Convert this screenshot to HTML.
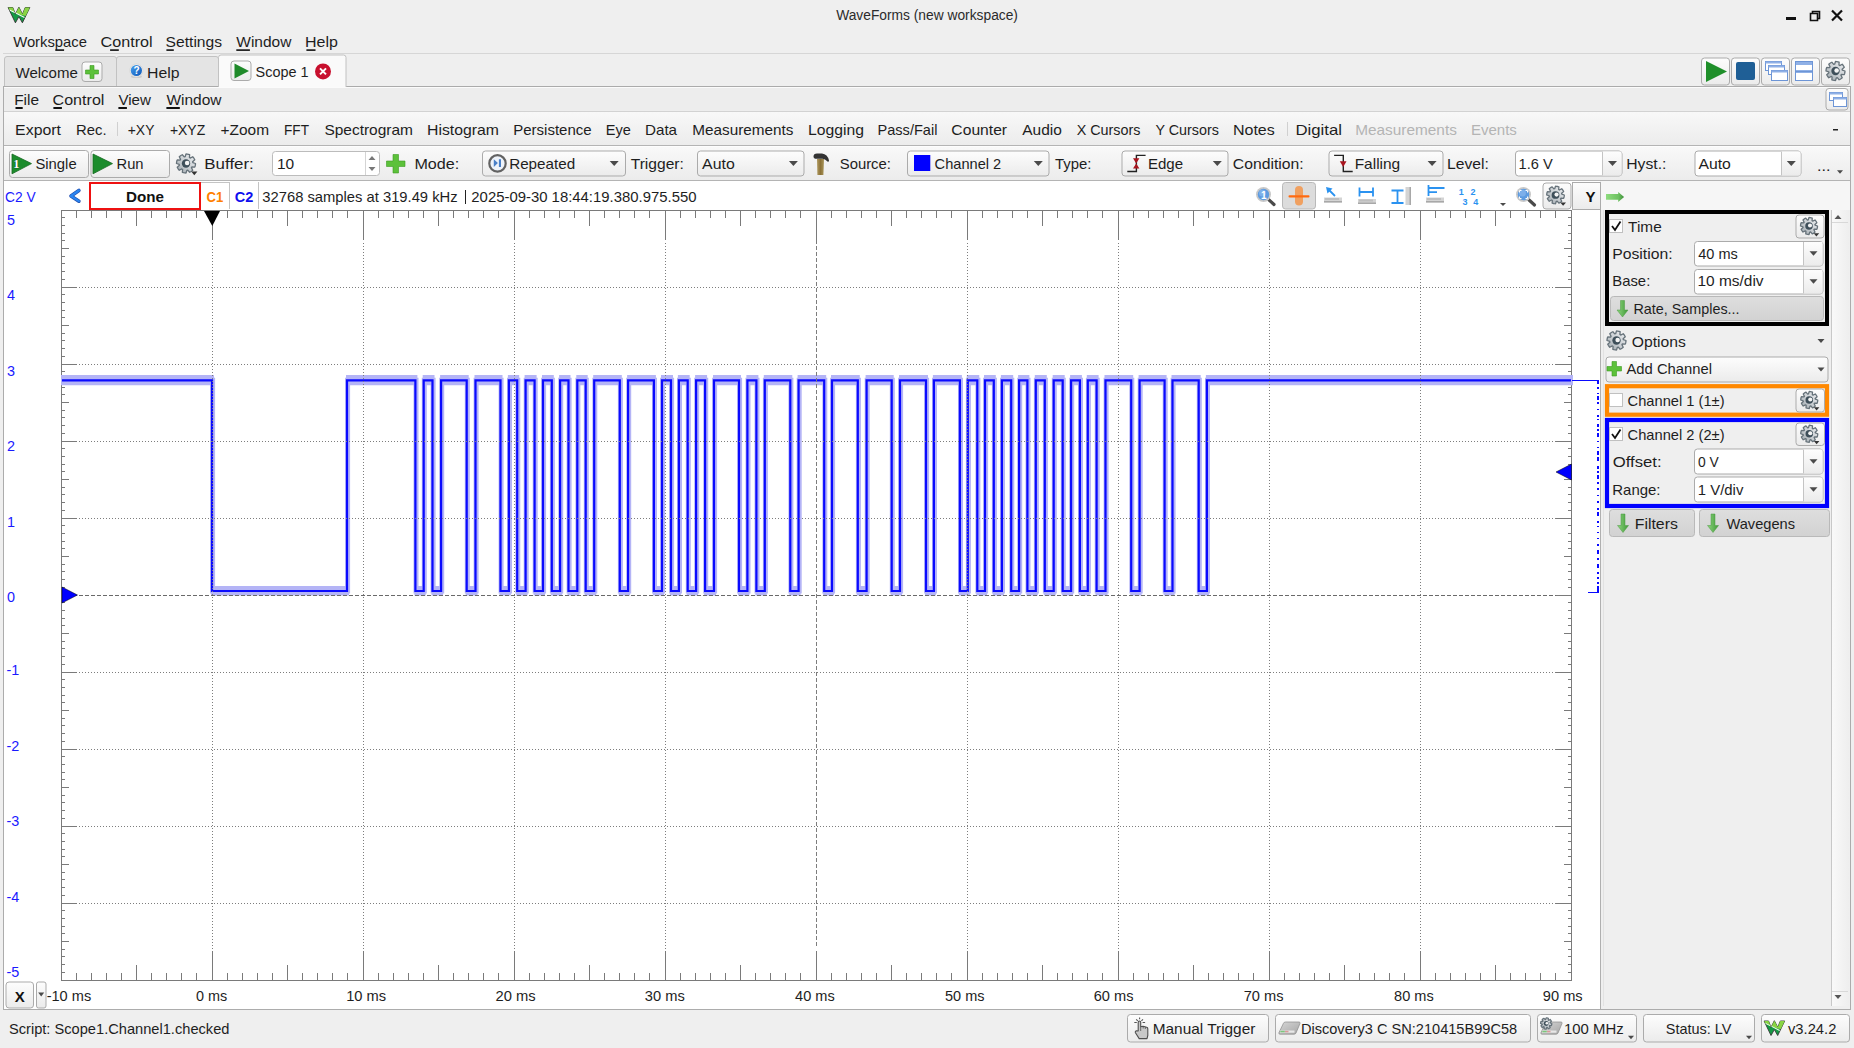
<!DOCTYPE html>
<html><head><meta charset="utf-8"><title>WaveForms</title>
<style>html,body{margin:0;padding:0;background:#efefef;overflow:hidden;width:1854px;height:1048px}</style>
</head><body>
<svg width="1854" height="1048" viewBox="0 0 1854 1048" font-family="Liberation Sans, sans-serif" style="display:block">
<defs>
<linearGradient id="btn" x1="0" y1="0" x2="0" y2="1"><stop offset="0" stop-color="#fdfdfd"/><stop offset="1" stop-color="#ebebeb"/></linearGradient>
<linearGradient id="tb1" x1="0" y1="0" x2="0" y2="1"><stop offset="0" stop-color="#f8f8f8"/><stop offset="1" stop-color="#ececec"/></linearGradient>
<linearGradient id="tb2" x1="0" y1="0" x2="0" y2="1"><stop offset="0" stop-color="#f9f9f9"/><stop offset="1" stop-color="#ececec"/></linearGradient>
<linearGradient id="gbtn" x1="0" y1="0" x2="0" y2="1"><stop offset="0" stop-color="#dedede"/><stop offset="1" stop-color="#d2d2d2"/></linearGradient>
<linearGradient id="garr" x1="0" y1="0" x2="1" y2="0"><stop offset="0" stop-color="#8fd47e"/><stop offset="1" stop-color="#3f9a38"/></linearGradient>
<linearGradient id="sbtrack" x1="0" y1="0" x2="1" y2="0"><stop offset="0" stop-color="#f9f9f9"/><stop offset="1" stop-color="#eeeeee"/></linearGradient>
<linearGradient id="devg" x1="0" y1="0" x2="1" y2="1"><stop offset="0" stop-color="#d6d6d6"/><stop offset="1" stop-color="#a6a6a6"/></linearGradient>
<linearGradient id="helpg" x1="0" y1="0" x2="1" y2="1"><stop offset="0" stop-color="#4aa0ee"/><stop offset="1" stop-color="#0a56b8"/></linearGradient>
<linearGradient id="hamg" x1="0" y1="0" x2="1" y2="0"><stop offset="0" stop-color="#b09a60"/><stop offset="0.5" stop-color="#8c7238"/><stop offset="1" stop-color="#a89458"/></linearGradient>
<linearGradient id="garr2" x1="0" y1="0" x2="1" y2="0"><stop offset="0" stop-color="#8edc7e"/><stop offset="0.7" stop-color="#6cc060"/><stop offset="1" stop-color="#3e8e3a"/></linearGradient>
<linearGradient id="gearg" x1="1" y1="0" x2="0" y2="1"><stop offset="0" stop-color="#eef0f2"/><stop offset="0.55" stop-color="#c8cdd1"/><stop offset="1" stop-color="#9aa4aa"/></linearGradient>
</defs>
<rect x="0" y="0" width="1854" height="1048" fill="#efefef"/>
<g transform="translate(8,7) scale(1.0)"><clipPath id="wclip8"><path d="M0.1,0.5 L4.8,0.5 L7.4,7.2 L10.9,0.2 L14.5,7.2 L17.2,0.5 L21.8,0.5 L14.4,15.8 L10.9,9.6 L7.4,15.8 Z"/></clipPath><path d="M0.1,0.5 L4.8,0.5 L7.4,7.2 L10.9,0.2 L14.5,7.2 L17.2,0.5 L21.8,0.5 L14.4,15.8 L10.9,9.6 L7.4,15.8 Z" fill="#159a44" stroke="#333" stroke-width="0.9" stroke-linejoin="round"/><g clip-path="url(#wclip8)"><path d="M-1,-1 H23 V9 Q16,10.5 1.5,2.8 Z" fill="#8ad444"/><path d="M1.5,3 Q9,6.5 16.5,10.5" stroke="#f4fff0" stroke-width="1.1" fill="none"/></g></g>
<text x="836.20" y="19.6" font-size="14" fill="#2b2b2b" textLength="181.78" lengthAdjust="spacingAndGlyphs">WaveForms (new workspace)</text>
<rect x="1786" y="17" width="10" height="3" fill="#111"/>
<path d="M1810.5,13.5 h7 v7 h-7 z M1812.5,13.5 v-2 h7 v7 h-2" fill="none" stroke="#111" stroke-width="1.6"/>
<path d="M1832,10.5 L1842,20.5 M1842,10.5 L1832,20.5" stroke="#111" stroke-width="2.2"/>
<text x="13.20" y="47.2" font-size="14.5" fill="#1e1e1e" textLength="73.73" lengthAdjust="spacingAndGlyphs">Workspace</text>
<rect x="55.3" y="49.3" width="8.799999999999997" height="1.6" fill="#111"/>
<text x="100.57" y="47.2" font-size="14.5" fill="#1e1e1e" textLength="52.05" lengthAdjust="spacingAndGlyphs">Control</text>
<rect x="110.1" y="49.3" width="8.700000000000003" height="1.6" fill="#111"/>
<text x="165.59" y="47.2" font-size="14.5" fill="#1e1e1e" textLength="56.52" lengthAdjust="spacingAndGlyphs">Settings</text>
<rect x="166.4" y="49.3" width="7.400000000000006" height="1.6" fill="#111"/>
<text x="236.30" y="47.2" font-size="14.5" fill="#1e1e1e" textLength="55.08" lengthAdjust="spacingAndGlyphs">Window</text>
<rect x="236.3" y="49.3" width="13.599999999999994" height="1.6" fill="#111"/>
<text x="305.02" y="47.2" font-size="14.5" fill="#1e1e1e" textLength="32.92" lengthAdjust="spacingAndGlyphs">Help</text>
<rect x="306.4" y="49.3" width="9.100000000000023" height="1.6" fill="#111"/>
<rect x="3" y="53" width="1848" height="1" fill="#d6d6d6"/>
<path d="M4.5,86 V59 Q4.5,56.5 7,56.5 H114 Q116.5,56.5 116.5,59 V86" fill="#e4e4e4" stroke="#c2c2c2"/>
<path d="M116.5,86 V59 Q116.5,56.5 119,56.5 H216 Q218.5,56.5 218.5,59 V86" fill="#e4e4e4" stroke="#c2c2c2"/>
<rect x="3" y="86" width="1848" height="1" fill="#ababab"/>
<rect x="4" y="87" width="1846" height="1" fill="#fbfbfb"/>
<rect x="4" y="88" width="1846" height="23" fill="#ededed"/>
<path d="M218.5,87 V57.5 Q218.5,55 221,55 H343.5 Q346,55 346,57.5 V87" fill="#fafafa" stroke="#c2c2c2"/>
<text x="15.50" y="78.2" font-size="14.5" fill="#1e1e1e" textLength="62.30" lengthAdjust="spacingAndGlyphs">Welcome</text>
<rect x="82.0" y="62.0" width="20.0" height="19.5" rx="3" fill="url(#btn)" stroke="#ababab"/>
<path d="M90,65.5 h4 v4.5 h4.5 v4 h-4.5 v4.5 h-4 v-4.5 h-4.5 v-4 h4.5 z" fill="#5cc13a" stroke="#3d9a24" stroke-width="0.6"/>
<ellipse cx="136.4" cy="76.5" rx="5.5" ry="1.5" fill="#bbb" opacity="0.6"/>
<circle cx="136.4" cy="70.5" r="6.6" fill="#f2eeea" stroke="#d4d4d4" stroke-width="0.8"/>
<circle cx="136.4" cy="70.5" r="5.6" fill="url(#helpg)"/>
<text x="133.60" y="74.2" font-size="10" fill="#fff" font-weight="bold">?</text>
<text x="147.14" y="78.2" font-size="14.5" fill="#1e1e1e" textLength="32.49" lengthAdjust="spacingAndGlyphs">Help</text>
<rect x="231.0" y="61.0" width="20.0" height="19.5" rx="3" fill="url(#btn)" stroke="#ababab"/>
<path d="M234.5,63.5 L249,71 L234.5,78.5 Z" fill="#1f8a2a"/>
<text x="255.55" y="77.2" font-size="14.5" fill="#1e1e1e" textLength="52.96" lengthAdjust="spacingAndGlyphs">Scope 1</text>
<circle cx="323" cy="71.4" r="8" fill="#c8102e"/>
<path d="M320,68.4 L326,74.4 M326,68.4 L320,74.4" stroke="#fff" stroke-width="2"/>
<rect x="1701.5" y="58.0" width="28" height="27.0" rx="3" fill="url(#btn)" stroke="#ababab"/>
<rect x="1731.5" y="58.0" width="28" height="27.0" rx="3" fill="url(#btn)" stroke="#ababab"/>
<rect x="1761.5" y="58.0" width="28" height="27.0" rx="3" fill="url(#btn)" stroke="#ababab"/>
<rect x="1791.5" y="58.0" width="28" height="27.0" rx="3" fill="url(#btn)" stroke="#ababab"/>
<rect x="1821.5" y="58.0" width="28" height="27.0" rx="3" fill="url(#btn)" stroke="#ababab"/>
<path d="M1706,61 L1727,71.5 L1706,82 Z" fill="#1f8f2a"/>
<rect x="1736" y="62" width="19" height="18" fill="#1f5f96" rx="2"/>
<rect x="1765.5" y="61.5" width="16" height="9" fill="#fff" stroke="#6d95d6"/>
<rect x="1765.5" y="61.5" width="16" height="2" fill="#8fb0e6"/>
<rect x="1768.5" y="65.5" width="16" height="9" fill="#fff" stroke="#6d95d6"/>
<rect x="1768.5" y="65.5" width="16" height="2" fill="#8fb0e6"/>
<rect x="1771.5" y="70.5" width="16" height="10" fill="#fff" stroke="#6d95d6"/>
<rect x="1771.5" y="70.5" width="16" height="2" fill="#8fb0e6"/>
<rect x="1795.5" y="61.5" width="17" height="19" fill="#fff" stroke="#6d95d6"/>
<rect x="1796" y="62" width="16" height="3" fill="#8fb0e6"/>
<rect x="1796" y="70" width="16" height="3" fill="#8fb0e6"/>
<rect x="1796" y="71" width="17" height="1" fill="#6d95d6"/>
<rect x="3" y="86" width="1" height="924" fill="#acacac"/>
<rect x="1850" y="86" width="1" height="924" fill="#acacac"/>
<text x="14.17" y="105.0" font-size="14.5" fill="#1e1e1e" textLength="24.79" lengthAdjust="spacingAndGlyphs">File</text>
<rect x="15.5" y="107" width="7.199999999999999" height="2" fill="#111"/>
<text x="52.57" y="105.0" font-size="14.5" fill="#1e1e1e" textLength="51.84" lengthAdjust="spacingAndGlyphs">Control</text>
<rect x="53.4" y="107" width="8.5" height="2" fill="#111"/>
<text x="118.40" y="105.0" font-size="14.5" fill="#1e1e1e" textLength="32.52" lengthAdjust="spacingAndGlyphs">View</text>
<rect x="118.4" y="107" width="8.5" height="2" fill="#111"/>
<text x="166.40" y="105.0" font-size="14.5" fill="#1e1e1e" textLength="55.08" lengthAdjust="spacingAndGlyphs">Window</text>
<rect x="166.4" y="107" width="13.400000000000006" height="2" fill="#111"/>
<rect x="4" y="111" width="1846" height="1" fill="#d2d2d2"/>
<rect x="1826.0" y="88.5" width="22.0" height="21.5" rx="3" fill="url(#btn)" stroke="#ababab"/>
<rect x="1829.5" y="92.5" width="13" height="8" fill="#fff" stroke="#6d95d6"/>
<rect x="1829.5" y="92.5" width="13" height="2" fill="#8fb0e6"/>
<rect x="1833.5" y="97.5" width="13" height="9" fill="#fff" stroke="#6d95d6"/>
<rect x="1833.5" y="97.5" width="13" height="2" fill="#8fb0e6"/>
<rect x="4" y="112" width="1846" height="33" fill="url(#tb1)"/>
<rect x="4" y="145" width="1846" height="1" fill="#b4b4b4"/>
<rect x="4" y="146" width="1846" height="34" fill="url(#tb2)"/>
<rect x="4" y="146" width="1846" height="1" fill="#fdfdfd"/>
<text x="15.13" y="134.8" font-size="14.5" fill="#1e1e1e" textLength="45.86" lengthAdjust="spacingAndGlyphs">Export</text>
<text x="76.02" y="134.8" font-size="14.5" fill="#1e1e1e" textLength="30.54" lengthAdjust="spacingAndGlyphs">Rec.</text>
<text x="127.78" y="134.8" font-size="14.5" fill="#1e1e1e" textLength="26.62" lengthAdjust="spacingAndGlyphs">+XY</text>
<text x="169.88" y="134.8" font-size="14.5" fill="#1e1e1e" textLength="35.33" lengthAdjust="spacingAndGlyphs">+XYZ</text>
<text x="220.50" y="134.8" font-size="14.5" fill="#1e1e1e" textLength="48.51" lengthAdjust="spacingAndGlyphs">+Zoom</text>
<text x="284.02" y="134.8" font-size="14.5" fill="#1e1e1e" textLength="24.98" lengthAdjust="spacingAndGlyphs">FFT</text>
<text x="324.40" y="134.8" font-size="14.5" fill="#1e1e1e" textLength="88.58" lengthAdjust="spacingAndGlyphs">Spectrogram</text>
<text x="427.04" y="134.8" font-size="14.5" fill="#1e1e1e" textLength="71.86" lengthAdjust="spacingAndGlyphs">Histogram</text>
<text x="513.21" y="134.8" font-size="14.5" fill="#1e1e1e" textLength="78.43" lengthAdjust="spacingAndGlyphs">Persistence</text>
<text x="605.75" y="134.8" font-size="14.5" fill="#1e1e1e" textLength="25.05" lengthAdjust="spacingAndGlyphs">Eye</text>
<text x="644.99" y="134.8" font-size="14.5" fill="#1e1e1e" textLength="32.09" lengthAdjust="spacingAndGlyphs">Data</text>
<text x="692.38" y="134.8" font-size="14.5" fill="#1e1e1e" textLength="101.11" lengthAdjust="spacingAndGlyphs">Measurements</text>
<text x="807.94" y="134.8" font-size="14.5" fill="#1e1e1e" textLength="55.99" lengthAdjust="spacingAndGlyphs">Logging</text>
<text x="877.55" y="134.8" font-size="14.5" fill="#1e1e1e" textLength="59.85" lengthAdjust="spacingAndGlyphs">Pass/Fail</text>
<text x="951.39" y="134.8" font-size="14.5" fill="#1e1e1e" textLength="55.68" lengthAdjust="spacingAndGlyphs">Counter</text>
<text x="1022.20" y="134.8" font-size="14.5" fill="#1e1e1e" textLength="39.63" lengthAdjust="spacingAndGlyphs">Audio</text>
<text x="1076.71" y="134.8" font-size="14.5" fill="#1e1e1e" textLength="63.76" lengthAdjust="spacingAndGlyphs">X Cursors</text>
<text x="1155.45" y="134.8" font-size="14.5" fill="#1e1e1e" textLength="63.39" lengthAdjust="spacingAndGlyphs">Y Cursors</text>
<text x="1232.92" y="134.8" font-size="14.5" fill="#1e1e1e" textLength="41.89" lengthAdjust="spacingAndGlyphs">Notes</text>
<text x="1295.46" y="134.8" font-size="14.5" fill="#1e1e1e" textLength="46.55" lengthAdjust="spacingAndGlyphs">Digital</text>
<text x="1355.17" y="134.8" font-size="14.5" fill="#b4b4b4" textLength="101.72" lengthAdjust="spacingAndGlyphs">Measurements</text>
<text x="1470.90" y="134.8" font-size="14.5" fill="#b4b4b4" textLength="46.01" lengthAdjust="spacingAndGlyphs">Events</text>
<rect x="1833" y="129" width="5" height="1.5" fill="#222"/>
<rect x="117" y="122" width="1" height="14" fill="#d0d0d0"/>
<rect x="1287" y="122" width="1" height="14" fill="#d0d0d0"/>
<rect x="4" y="180" width="1846" height="1" fill="#b4b4b4"/>
<rect x="9.5" y="150.5" width="79" height="27" rx="3" fill="url(#btn)" stroke="#ababab"/>
<path d="M12,154 L31.5,163.6 L12,173.8 Z" fill="#1b8c2c" stroke="#166a22" stroke-width="0.8" stroke-linejoin="round"/>
<text x="13.2" y="168" font-family="Liberation Serif, serif" font-weight="bold" font-size="12.5" fill="#fff" stroke="#0d4a14" stroke-width="0.6" paint-order="stroke">1</text>
<text x="35.43" y="168.8" font-size="14.5" fill="#1e1e1e" textLength="41.24" lengthAdjust="spacingAndGlyphs">Single</text>
<rect x="91.0" y="150.5" width="78.5" height="27" rx="3" fill="url(#btn)" stroke="#ababab"/>
<path d="M93,154 L112.5,163.6 L93,173.8 Z" fill="#1b8c2c" stroke="#166a22" stroke-width="0.8" stroke-linejoin="round"/>
<text x="116.53" y="168.8" font-size="14.5" fill="#1e1e1e" textLength="27.04" lengthAdjust="spacingAndGlyphs">Run</text>
<polygon points="186.00,154.00 187.24,154.08 188.46,154.32 189.64,154.72 189.42,157.58 190.16,158.07 192.72,156.78 193.54,157.72 194.23,158.75 194.78,159.86 192.61,161.73 192.78,162.61 195.50,163.50 195.42,164.74 195.18,165.96 194.78,167.14 191.92,166.92 191.43,167.66 192.72,170.22 191.78,171.04 190.75,171.73 189.64,172.28 187.77,170.11 186.89,170.28 186.00,173.00 184.76,172.92 183.54,172.68 182.36,172.28 182.58,169.42 181.84,168.93 179.28,170.22 178.46,169.28 177.77,168.25 177.22,167.14 179.39,165.27 179.22,164.39 176.50,163.50 176.58,162.26 176.82,161.04 177.22,159.86 180.08,160.08 180.57,159.34 179.28,156.78 180.22,155.96 181.25,155.27 182.36,154.72 184.23,156.89 185.11,156.72" fill="url(#gearg)" stroke="#66727a" stroke-width="1.3" stroke-linejoin="round"/>
<circle cx="186" cy="163.5" r="4.18" fill="#3e4f5a"/>
<circle cx="187.14" cy="163.03" r="2.28" fill="#f4f4f4"/>
<path d="M191.2,171.6 h6.2 l-3.1,3.6 z" fill="#333"/>
<text x="204.34" y="168.8" font-size="14.5" fill="#1e1e1e" textLength="49.46" lengthAdjust="spacingAndGlyphs">Buffer:</text>
<rect x="272.5" y="151.5" width="107" height="24" rx="3" fill="#fff" stroke="#bcbcbc"/>
<rect x="365" y="152" width="1" height="23" fill="#d4d4d4"/>
<path d="M368.5,160 L372,156 L375.5,160 Z" fill="#777"/>
<path d="M368.5,167 L372,171 L375.5,167 Z" fill="#777"/>
<text x="276.93" y="168.8" font-size="14.5" fill="#1e1e1e" textLength="17.25" lengthAdjust="spacingAndGlyphs">10</text>
<path d="M393,154.5 h5.5 v6.5 h6.5 v5.5 h-6.5 v6.5 h-5.5 v-6.5 h-6.5 v-5.5 h6.5 z" fill="#5cc13a" stroke="#3d9a24" stroke-width="0.6"/>
<text x="414.41" y="168.8" font-size="14.5" fill="#1e1e1e" textLength="44.85" lengthAdjust="spacingAndGlyphs">Mode:</text>
<rect x="482.5" y="151.0" width="143" height="25.0" rx="3" fill="url(#btn)" stroke="#ababab"/>
<circle cx="497.5" cy="163.4" r="8.2" fill="#eef3fa" stroke="#626262" stroke-width="2.2"/>
<path d="M493.8,159.3 L497.9,163.1 L493.8,166.9 Z M498.9,159.3 h2.1 v7.6 h-2.1 z" fill="#4a80c8"/>
<text x="509.19" y="168.8" font-size="14.5" fill="#1e1e1e" textLength="65.94" lengthAdjust="spacingAndGlyphs">Repeated</text>
<path d="M609.7,161.0 L618.7,161.0 L614.2,166.0 Z" fill="#4a4a4a"/>
<text x="630.73" y="168.8" font-size="14.5" fill="#1e1e1e" textLength="53.10" lengthAdjust="spacingAndGlyphs">Trigger:</text>
<rect x="697.5" y="151.0" width="106.5" height="25.0" rx="3" fill="url(#btn)" stroke="#ababab"/>
<text x="702.10" y="168.8" font-size="14.5" fill="#1e1e1e" textLength="32.65" lengthAdjust="spacingAndGlyphs">Auto</text>
<path d="M788.9,161.0 L797.9,161.0 L793.4,166.0 Z" fill="#4a4a4a"/>
<path d="M817,159 h7 l-0.6,16 h-6 z" fill="url(#hamg)"/>
<path d="M813.5,156.5 Q813.5,153.5 817,153.5 H822 Q827.5,154 829,160.5 Q828.8,162.3 827.5,161.5 Q825,158.8 822.5,158.8 H817 Q813.5,159 813.5,156.5 Z" fill="#333"/>
<text x="839.73" y="168.8" font-size="14.5" fill="#1e1e1e" textLength="51.23" lengthAdjust="spacingAndGlyphs">Source:</text>
<rect x="907.5" y="151.0" width="141.5" height="25.0" rx="3" fill="url(#btn)" stroke="#ababab"/>
<rect x="914" y="155" width="16.3" height="16" fill="#0000ff"/>
<text x="934.64" y="168.8" font-size="14.5" fill="#1e1e1e" textLength="66.57" lengthAdjust="spacingAndGlyphs">Channel 2</text>
<path d="M1033.8,161.0 L1042.8,161.0 L1038.3,166.0 Z" fill="#4a4a4a"/>
<text x="1055.04" y="168.8" font-size="14.5" fill="#1e1e1e" textLength="36.41" lengthAdjust="spacingAndGlyphs">Type:</text>
<rect x="1122.0" y="151.0" width="106.0" height="25.0" rx="3" fill="url(#btn)" stroke="#ababab"/>
<path d="M1127.3,171.5 H1136.4 V155.4 H1145.6" fill="none" stroke="#222" stroke-width="1.4"/>
<path d="M1133,158.2 H1139.4 L1136.2,163.4 Z M1133,168.5 H1139.4 L1136.2,163.4 Z" fill="#a8141e"/>
<text x="1147.90" y="168.8" font-size="14.5" fill="#1e1e1e" textLength="35.15" lengthAdjust="spacingAndGlyphs">Edge</text>
<path d="M1212.8,161.0 L1221.8,161.0 L1217.3,166.0 Z" fill="#4a4a4a"/>
<text x="1232.89" y="168.8" font-size="14.5" fill="#1e1e1e" textLength="70.82" lengthAdjust="spacingAndGlyphs">Condition:</text>
<rect x="1329.0" y="151.0" width="114.0" height="25.0" rx="3" fill="url(#btn)" stroke="#ababab"/>
<path d="M1334.1,155.4 H1343.3 V171.5 H1352.7" fill="none" stroke="#222" stroke-width="1.4"/>
<path d="M1339.8,161.2 H1346.5 L1343.2,167 Z" fill="#a8141e"/>
<text x="1354.67" y="168.8" font-size="14.5" fill="#1e1e1e" textLength="45.57" lengthAdjust="spacingAndGlyphs">Falling</text>
<path d="M1427.6,161.0 L1436.6,161.0 L1432.1,166.0 Z" fill="#4a4a4a"/>
<text x="1446.95" y="168.8" font-size="14.5" fill="#1e1e1e" textLength="41.85" lengthAdjust="spacingAndGlyphs">Level:</text>
<rect x="1515.5" y="151.0" width="106.5" height="25.0" rx="3" fill="#fff" stroke="#ababab"/>
<rect x="1602" y="151.5" width="19.5" height="24.0" fill="url(#btn)"/>
<rect x="1602" y="151.5" width="1" height="24.0" fill="#c4c4c4"/>
<text x="1518.59" y="168.8" font-size="14.5" fill="#1e1e1e" textLength="34.22" lengthAdjust="spacingAndGlyphs">1.6 V</text>
<path d="M1608.0,161.0 L1617.0,161.0 L1612.5,166.0 Z" fill="#4a4a4a"/>
<text x="1626.24" y="168.8" font-size="14.5" fill="#1e1e1e" textLength="40.18" lengthAdjust="spacingAndGlyphs">Hyst.:</text>
<rect x="1695.0" y="151.0" width="106.0" height="25.0" rx="3" fill="#fff" stroke="#ababab"/>
<rect x="1781" y="151.5" width="19.5" height="24.0" fill="url(#btn)"/>
<rect x="1781" y="151.5" width="1" height="24.0" fill="#c4c4c4"/>
<text x="1698.40" y="168.8" font-size="14.5" fill="#1e1e1e" textLength="32.45" lengthAdjust="spacingAndGlyphs">Auto</text>
<path d="M1786.8,161.0 L1795.8,161.0 L1791.3,166.0 Z" fill="#4a4a4a"/>
<text x="1817.01" y="170.5" font-size="14.5" fill="#1e1e1e" textLength="13.49" lengthAdjust="spacingAndGlyphs">...</text>
<path d="M1837.0,170.2 L1843.0,170.2 L1840.0,173.8 Z" fill="#4a4a4a"/>
<rect x="4" y="181" width="1596" height="828" fill="#ffffff"/>
<rect x="1600" y="210" width="1" height="799" fill="#b0b0b0"/>
<text x="4.99" y="201.7" font-size="14.5" fill="#1a1aff" textLength="30.61" lengthAdjust="spacingAndGlyphs">C2 V</text>
<path d="M78.9,190.5 L71,196 L78.9,201.2" fill="none" stroke="#2450b0" stroke-width="3.6" stroke-linejoin="round" stroke-linecap="round"/>
<path d="M78.9,190.5 L71,196 L78.9,201.2" fill="none" stroke="#2a86f0" stroke-width="2.2" stroke-linejoin="round" stroke-linecap="round"/>
<rect x="90" y="183" width="110" height="26" fill="#fff" stroke="#ee1111" stroke-width="2"/>
<text x="145.00" y="201.8" font-size="14.5" fill="#111" font-weight="bold" text-anchor="middle" textLength="38.0" lengthAdjust="spacingAndGlyphs">Done</text>
<rect x="229" y="182" width="1" height="27" fill="#c4c4c4"/>
<rect x="258" y="182" width="1" height="27" fill="#c4c4c4"/>
<rect x="201" y="182" width="29" height="1" fill="#c4c4c4"/>
<text x="206.55" y="201.8" font-size="14.5" fill="#ff8000" font-weight="bold" textLength="16.72" lengthAdjust="spacingAndGlyphs">C1</text>
<text x="234.80" y="201.8" font-size="14.5" fill="#1010ee" font-weight="bold" textLength="18.55" lengthAdjust="spacingAndGlyphs">C2</text>
<text x="262.39" y="202.3" font-size="14.5" fill="#1e1e1e" textLength="195.17" lengthAdjust="spacingAndGlyphs">32768 samples at 319.49 kHz</text>
<rect x="465" y="190" width="1" height="14" fill="#222"/>
<text x="471.33" y="202.3" font-size="14.5" fill="#1e1e1e" textLength="225.15" lengthAdjust="spacingAndGlyphs">2025-09-30 18:44:19.380.975.550</text>
<rect x="61" y="210" width="1511" height="1" fill="#7a7a7a"/>
<rect x="61" y="980" width="1511" height="1" fill="#7a7a7a"/>
<rect x="61" y="210" width="1" height="771" fill="#7a7a7a"/>
<rect x="1571" y="210" width="1" height="771" fill="#7a7a7a"/>
<path d="M76.5,211 v7 M76.5,980 v-7 M91.5,211 v7 M91.5,980 v-7 M106.5,211 v7 M106.5,980 v-7 M121.5,211 v7 M121.5,980 v-7 M136.5,211 v15 M136.5,980 v-15 M151.5,211 v7 M151.5,980 v-7 M166.5,211 v7 M166.5,980 v-7 M181.5,211 v7 M181.5,980 v-7 M196.5,211 v7 M196.5,980 v-7 M212.5,211 v29 M212.5,980 v-29 M227.5,211 v7 M227.5,980 v-7 M242.5,211 v7 M242.5,980 v-7 M257.5,211 v7 M257.5,980 v-7 M272.5,211 v7 M272.5,980 v-7 M287.5,211 v15 M287.5,980 v-15 M302.5,211 v7 M302.5,980 v-7 M317.5,211 v7 M317.5,980 v-7 M332.5,211 v7 M332.5,980 v-7 M347.5,211 v7 M347.5,980 v-7 M363.5,211 v29 M363.5,980 v-29 M378.5,211 v7 M378.5,980 v-7 M393.5,211 v7 M393.5,980 v-7 M408.5,211 v7 M408.5,980 v-7 M423.5,211 v7 M423.5,980 v-7 M438.5,211 v15 M438.5,980 v-15 M453.5,211 v7 M453.5,980 v-7 M468.5,211 v7 M468.5,980 v-7 M483.5,211 v7 M483.5,980 v-7 M498.5,211 v7 M498.5,980 v-7 M514.5,211 v29 M514.5,980 v-29 M529.5,211 v7 M529.5,980 v-7 M544.5,211 v7 M544.5,980 v-7 M559.5,211 v7 M559.5,980 v-7 M574.5,211 v7 M574.5,980 v-7 M589.5,211 v15 M589.5,980 v-15 M604.5,211 v7 M604.5,980 v-7 M619.5,211 v7 M619.5,980 v-7 M634.5,211 v7 M634.5,980 v-7 M649.5,211 v7 M649.5,980 v-7 M665.5,211 v29 M665.5,980 v-29 M680.5,211 v7 M680.5,980 v-7 M695.5,211 v7 M695.5,980 v-7 M710.5,211 v7 M710.5,980 v-7 M725.5,211 v7 M725.5,980 v-7 M740.5,211 v15 M740.5,980 v-15 M755.5,211 v7 M755.5,980 v-7 M770.5,211 v7 M770.5,980 v-7 M785.5,211 v7 M785.5,980 v-7 M800.5,211 v7 M800.5,980 v-7 M816.5,211 v33 M816.5,980 v-29 M831.5,211 v7 M831.5,980 v-7 M846.5,211 v7 M846.5,980 v-7 M861.5,211 v7 M861.5,980 v-7 M876.5,211 v7 M876.5,980 v-7 M891.5,211 v15 M891.5,980 v-15 M906.5,211 v7 M906.5,980 v-7 M921.5,211 v7 M921.5,980 v-7 M936.5,211 v7 M936.5,980 v-7 M951.5,211 v7 M951.5,980 v-7 M967.5,211 v29 M967.5,980 v-29 M982.5,211 v7 M982.5,980 v-7 M997.5,211 v7 M997.5,980 v-7 M1012.5,211 v7 M1012.5,980 v-7 M1027.5,211 v7 M1027.5,980 v-7 M1042.5,211 v15 M1042.5,980 v-15 M1057.5,211 v7 M1057.5,980 v-7 M1072.5,211 v7 M1072.5,980 v-7 M1087.5,211 v7 M1087.5,980 v-7 M1102.5,211 v7 M1102.5,980 v-7 M1118.5,211 v29 M1118.5,980 v-29 M1133.5,211 v7 M1133.5,980 v-7 M1148.5,211 v7 M1148.5,980 v-7 M1163.5,211 v7 M1163.5,980 v-7 M1178.5,211 v7 M1178.5,980 v-7 M1193.5,211 v15 M1193.5,980 v-15 M1208.5,211 v7 M1208.5,980 v-7 M1223.5,211 v7 M1223.5,980 v-7 M1238.5,211 v7 M1238.5,980 v-7 M1253.5,211 v7 M1253.5,980 v-7 M1269.5,211 v29 M1269.5,980 v-29 M1284.5,211 v7 M1284.5,980 v-7 M1299.5,211 v7 M1299.5,980 v-7 M1314.5,211 v7 M1314.5,980 v-7 M1329.5,211 v7 M1329.5,980 v-7 M1344.5,211 v15 M1344.5,980 v-15 M1359.5,211 v7 M1359.5,980 v-7 M1374.5,211 v7 M1374.5,980 v-7 M1389.5,211 v7 M1389.5,980 v-7 M1404.5,211 v7 M1404.5,980 v-7 M1420.5,211 v29 M1420.5,980 v-29 M1435.5,211 v7 M1435.5,980 v-7 M1450.5,211 v7 M1450.5,980 v-7 M1465.5,211 v7 M1465.5,980 v-7 M1480.5,211 v7 M1480.5,980 v-7 M1495.5,211 v15 M1495.5,980 v-15 M1510.5,211 v7 M1510.5,980 v-7 M1525.5,211 v7 M1525.5,980 v-7 M1540.5,211 v7 M1540.5,980 v-7 M1555.5,211 v7 M1555.5,980 v-7 M62,217.5 h3 M1571,217.5 h-3 M62,225.5 h3 M1571,225.5 h-3 M62,233.5 h3 M1571,233.5 h-3 M62,240.5 h3 M1571,240.5 h-3 M62,248.5 h7 M1571,248.5 h-7 M62,256.5 h3 M1571,256.5 h-3 M62,263.5 h3 M1571,263.5 h-3 M62,271.5 h3 M1571,271.5 h-3 M62,279.5 h3 M1571,279.5 h-3 M62,287.5 h15 M1571,287.5 h-15 M62,294.5 h3 M1571,294.5 h-3 M62,302.5 h3 M1571,302.5 h-3 M62,310.5 h3 M1571,310.5 h-3 M62,317.5 h3 M1571,317.5 h-3 M62,325.5 h7 M1571,325.5 h-7 M62,333.5 h3 M1571,333.5 h-3 M62,340.5 h3 M1571,340.5 h-3 M62,348.5 h3 M1571,348.5 h-3 M62,356.5 h3 M1571,356.5 h-3 M62,364.5 h15 M1571,364.5 h-15 M62,371.5 h3 M1571,371.5 h-3 M62,379.5 h3 M1571,379.5 h-3 M62,387.5 h3 M1571,387.5 h-3 M62,394.5 h3 M1571,394.5 h-3 M62,402.5 h7 M1571,402.5 h-7 M62,410.5 h3 M1571,410.5 h-3 M62,417.5 h3 M1571,417.5 h-3 M62,425.5 h3 M1571,425.5 h-3 M62,433.5 h3 M1571,433.5 h-3 M62,441.5 h15 M1571,441.5 h-15 M62,448.5 h3 M1571,448.5 h-3 M62,456.5 h3 M1571,456.5 h-3 M62,464.5 h3 M1571,464.5 h-3 M62,471.5 h3 M1571,471.5 h-3 M62,479.5 h7 M1571,479.5 h-7 M62,487.5 h3 M1571,487.5 h-3 M62,494.5 h3 M1571,494.5 h-3 M62,502.5 h3 M1571,502.5 h-3 M62,510.5 h3 M1571,510.5 h-3 M62,518.5 h15 M1571,518.5 h-15 M62,525.5 h3 M1571,525.5 h-3 M62,533.5 h3 M1571,533.5 h-3 M62,541.5 h3 M1571,541.5 h-3 M62,548.5 h3 M1571,548.5 h-3 M62,556.5 h7 M1571,556.5 h-7 M62,564.5 h3 M1571,564.5 h-3 M62,571.5 h3 M1571,571.5 h-3 M62,579.5 h3 M1571,579.5 h-3 M62,587.5 h3 M1571,587.5 h-3 M62,595.5 h15 M1571,595.5 h-15 M62,602.5 h3 M1571,602.5 h-3 M62,610.5 h3 M1571,610.5 h-3 M62,618.5 h3 M1571,618.5 h-3 M62,625.5 h3 M1571,625.5 h-3 M62,633.5 h7 M1571,633.5 h-7 M62,641.5 h3 M1571,641.5 h-3 M62,648.5 h3 M1571,648.5 h-3 M62,656.5 h3 M1571,656.5 h-3 M62,664.5 h3 M1571,664.5 h-3 M62,672.5 h15 M1571,672.5 h-15 M62,679.5 h3 M1571,679.5 h-3 M62,687.5 h3 M1571,687.5 h-3 M62,695.5 h3 M1571,695.5 h-3 M62,702.5 h3 M1571,702.5 h-3 M62,710.5 h7 M1571,710.5 h-7 M62,718.5 h3 M1571,718.5 h-3 M62,725.5 h3 M1571,725.5 h-3 M62,733.5 h3 M1571,733.5 h-3 M62,741.5 h3 M1571,741.5 h-3 M62,749.5 h15 M1571,749.5 h-15 M62,756.5 h3 M1571,756.5 h-3 M62,764.5 h3 M1571,764.5 h-3 M62,772.5 h3 M1571,772.5 h-3 M62,779.5 h3 M1571,779.5 h-3 M62,787.5 h7 M1571,787.5 h-7 M62,795.5 h3 M1571,795.5 h-3 M62,802.5 h3 M1571,802.5 h-3 M62,810.5 h3 M1571,810.5 h-3 M62,818.5 h3 M1571,818.5 h-3 M62,826.5 h15 M1571,826.5 h-15 M62,833.5 h3 M1571,833.5 h-3 M62,841.5 h3 M1571,841.5 h-3 M62,849.5 h3 M1571,849.5 h-3 M62,856.5 h3 M1571,856.5 h-3 M62,864.5 h7 M1571,864.5 h-7 M62,872.5 h3 M1571,872.5 h-3 M62,879.5 h3 M1571,879.5 h-3 M62,887.5 h3 M1571,887.5 h-3 M62,895.5 h3 M1571,895.5 h-3 M62,903.5 h15 M1571,903.5 h-15 M62,910.5 h3 M1571,910.5 h-3 M62,918.5 h3 M1571,918.5 h-3 M62,926.5 h3 M1571,926.5 h-3 M62,933.5 h3 M1571,933.5 h-3 M62,941.5 h7 M1571,941.5 h-7 M62,949.5 h3 M1571,949.5 h-3 M62,956.5 h3 M1571,956.5 h-3 M62,964.5 h3 M1571,964.5 h-3 M62,972.5 h3 M1571,972.5 h-3" stroke="#7a7a7a" stroke-width="1" fill="none"/>
<text x="7.00" y="225.0" font-size="14.4" fill="#1a1aff">5</text>
<text x="7.00" y="300.3" font-size="14.4" fill="#1a1aff">4</text>
<text x="7.00" y="376.0" font-size="14.4" fill="#1a1aff">3</text>
<text x="7.00" y="451.4" font-size="14.4" fill="#1a1aff">2</text>
<text x="7.00" y="526.9" font-size="14.4" fill="#1a1aff">1</text>
<text x="7.00" y="602.0" font-size="14.4" fill="#1a1aff">0</text>
<text x="6.40" y="675.0" font-size="14.4" fill="#1a1aff">-1</text>
<text x="6.40" y="750.5" font-size="14.4" fill="#1a1aff">-2</text>
<text x="6.40" y="826.0" font-size="14.4" fill="#1a1aff">-3</text>
<text x="6.40" y="901.5" font-size="14.4" fill="#1a1aff">-4</text>
<text x="6.40" y="977.0" font-size="14.4" fill="#1a1aff">-5</text>
<text x="46.70" y="1000.5" font-size="14.5" fill="#1e1e1e" textLength="44.48" lengthAdjust="spacingAndGlyphs">-10 ms</text>
<text x="196.00" y="1000.5" font-size="14.5" fill="#1e1e1e" textLength="31.22" lengthAdjust="spacingAndGlyphs">0 ms</text>
<text x="346.19" y="1000.5" font-size="14.5" fill="#1e1e1e" textLength="40.02" lengthAdjust="spacingAndGlyphs">10 ms</text>
<text x="495.54" y="1000.5" font-size="14.5" fill="#1e1e1e" textLength="40.17" lengthAdjust="spacingAndGlyphs">20 ms</text>
<text x="644.89" y="1000.5" font-size="14.5" fill="#1e1e1e" textLength="39.91" lengthAdjust="spacingAndGlyphs">30 ms</text>
<text x="795.05" y="1000.5" font-size="14.5" fill="#1e1e1e" textLength="39.65" lengthAdjust="spacingAndGlyphs">40 ms</text>
<text x="945.00" y="1000.5" font-size="14.5" fill="#1e1e1e" textLength="39.50" lengthAdjust="spacingAndGlyphs">50 ms</text>
<text x="1093.75" y="1000.5" font-size="14.5" fill="#1e1e1e" textLength="39.76" lengthAdjust="spacingAndGlyphs">60 ms</text>
<text x="1243.74" y="1000.5" font-size="14.5" fill="#1e1e1e" textLength="39.86" lengthAdjust="spacingAndGlyphs">70 ms</text>
<text x="1394.10" y="1000.5" font-size="14.5" fill="#1e1e1e" textLength="39.60" lengthAdjust="spacingAndGlyphs">80 ms</text>
<text x="1542.84" y="1000.5" font-size="14.5" fill="#1e1e1e" textLength="39.86" lengthAdjust="spacingAndGlyphs">90 ms</text>
<path d="M204,211 L220,211 L212.3,226 Z" fill="#000"/>
<path d="M62,587 L77.5,595 L62,603 Z" fill="#0000ff" stroke="#000" stroke-width="0.5"/>
<path d="M1571.5,464 L1556,472 L1571.5,480 Z" fill="#0000ff" stroke="#000" stroke-width="0.5"/>
<path d="M62,380.3 H212.0 V591.0 H347.0 V380.3 H415.4 V591.0 H423.7 V380.3 H432.5 V591.0 H441.1 V380.3 H466.7 V591.0 H475.5 V380.3 H500.5 V591.0 H508.9 V380.3 H517.2 V591.0 H525.6 V380.3 H534.6 V591.0 H543.0 V380.3 H551.8 V591.0 H560.1 V380.3 H568.5 V591.0 H577.3 V380.3 H585.7 V591.0 H594.2 V380.3 H619.8 V591.0 H628.1 V380.3 H653.9 V591.0 H662.0 V380.3 H671.0 V591.0 H678.9 V380.3 H687.7 V591.0 H696.1 V380.3 H705.1 V591.0 H714.0 V380.3 H739.0 V591.0 H747.4 V380.3 H756.4 V591.0 H764.8 V380.3 H790.3 V591.0 H798.6 V380.3 H824.2 V591.0 H832.0 V380.3 H857.8 V591.0 H866.6 V380.3 H891.7 V591.0 H900.0 V380.3 H926.0 V591.0 H933.9 V380.3 H959.9 V591.0 H967.8 V380.3 H977.3 V591.0 H985.0 V380.3 H993.8 V591.0 H1001.9 V380.3 H1011.2 V591.0 H1019.1 V380.3 H1027.4 V591.0 H1035.8 V380.3 H1044.8 V591.0 H1053.7 V380.3 H1062.7 V591.0 H1071.1 V380.3 H1079.9 V591.0 H1087.8 V380.3 H1096.6 V591.0 H1105.5 V380.3 H1131.2 V591.0 H1139.6 V380.3 H1164.6 V591.0 H1172.5 V380.3 H1198.7 V591.0 H1206.9 V380.3 H1571" fill="none" stroke="#b4b4f6" stroke-width="5" stroke-linejoin="miter" transform="translate(0.6,0)"/>
<path d="M61.0,375.0 H214.0 V385.3 H61.0 Z M211.0,586.0 H349.0 V595.5 H211.0 Z M346.0,375.0 H417.4 V385.3 H346.0 Z M414.4,586.0 H425.7 V595.5 H414.4 Z M422.7,375.0 H434.5 V385.3 H422.7 Z M431.5,586.0 H443.1 V595.5 H431.5 Z M440.1,375.0 H468.7 V385.3 H440.1 Z M465.7,586.0 H477.5 V595.5 H465.7 Z M474.5,375.0 H502.5 V385.3 H474.5 Z M499.5,586.0 H510.9 V595.5 H499.5 Z M507.9,375.0 H519.2 V385.3 H507.9 Z M516.2,586.0 H527.6 V595.5 H516.2 Z M524.6,375.0 H536.6 V385.3 H524.6 Z M533.6,586.0 H545.0 V595.5 H533.6 Z M542.0,375.0 H553.8 V385.3 H542.0 Z M550.8,586.0 H562.1 V595.5 H550.8 Z M559.1,375.0 H570.5 V385.3 H559.1 Z M567.5,586.0 H579.3 V595.5 H567.5 Z M576.3,375.0 H587.7 V385.3 H576.3 Z M584.7,586.0 H596.2 V595.5 H584.7 Z M593.2,375.0 H621.8 V385.3 H593.2 Z M618.8,586.0 H630.1 V595.5 H618.8 Z M627.1,375.0 H655.9 V385.3 H627.1 Z M652.9,586.0 H664.0 V595.5 H652.9 Z M661.0,375.0 H673.0 V385.3 H661.0 Z M670.0,586.0 H680.9 V595.5 H670.0 Z M677.9,375.0 H689.7 V385.3 H677.9 Z M686.7,586.0 H698.1 V595.5 H686.7 Z M695.1,375.0 H707.1 V385.3 H695.1 Z M704.1,586.0 H716.0 V595.5 H704.1 Z M713.0,375.0 H741.0 V385.3 H713.0 Z M738.0,586.0 H749.4 V595.5 H738.0 Z M746.4,375.0 H758.4 V385.3 H746.4 Z M755.4,586.0 H766.8 V595.5 H755.4 Z M763.8,375.0 H792.3 V385.3 H763.8 Z M789.3,586.0 H800.6 V595.5 H789.3 Z M797.6,375.0 H826.2 V385.3 H797.6 Z M823.2,586.0 H834.0 V595.5 H823.2 Z M831.0,375.0 H859.8 V385.3 H831.0 Z M856.8,586.0 H868.6 V595.5 H856.8 Z M865.6,375.0 H893.7 V385.3 H865.6 Z M890.7,586.0 H902.0 V595.5 H890.7 Z M899.0,375.0 H928.0 V385.3 H899.0 Z M925.0,586.0 H935.9 V595.5 H925.0 Z M932.9,375.0 H961.9 V385.3 H932.9 Z M958.9,586.0 H969.8 V595.5 H958.9 Z M966.8,375.0 H979.3 V385.3 H966.8 Z M976.3,586.0 H987.0 V595.5 H976.3 Z M984.0,375.0 H995.8 V385.3 H984.0 Z M992.8,586.0 H1003.9 V595.5 H992.8 Z M1000.9,375.0 H1013.2 V385.3 H1000.9 Z M1010.2,586.0 H1021.1 V595.5 H1010.2 Z M1018.1,375.0 H1029.4 V385.3 H1018.1 Z M1026.4,586.0 H1037.8 V595.5 H1026.4 Z M1034.8,375.0 H1046.8 V385.3 H1034.8 Z M1043.8,586.0 H1055.7 V595.5 H1043.8 Z M1052.7,375.0 H1064.7 V385.3 H1052.7 Z M1061.7,586.0 H1073.1 V595.5 H1061.7 Z M1070.1,375.0 H1081.9 V385.3 H1070.1 Z M1078.9,586.0 H1089.8 V595.5 H1078.9 Z M1086.8,375.0 H1098.6 V385.3 H1086.8 Z M1095.6,586.0 H1107.5 V595.5 H1095.6 Z M1104.5,375.0 H1133.2 V385.3 H1104.5 Z M1130.2,586.0 H1141.6 V595.5 H1130.2 Z M1138.6,375.0 H1166.6 V385.3 H1138.6 Z M1163.6,586.0 H1174.5 V595.5 H1163.6 Z M1171.5,375.0 H1200.7 V385.3 H1171.5 Z M1197.7,586.0 H1208.9 V595.5 H1197.7 Z M1205.9,375.0 H1573.0 V385.3 H1205.9 Z" fill="#b4b4f6"/>
<path d="M62,380.3 H212.0 V591.0 H347.0 V380.3 H415.4 V591.0 H423.7 V380.3 H432.5 V591.0 H441.1 V380.3 H466.7 V591.0 H475.5 V380.3 H500.5 V591.0 H508.9 V380.3 H517.2 V591.0 H525.6 V380.3 H534.6 V591.0 H543.0 V380.3 H551.8 V591.0 H560.1 V380.3 H568.5 V591.0 H577.3 V380.3 H585.7 V591.0 H594.2 V380.3 H619.8 V591.0 H628.1 V380.3 H653.9 V591.0 H662.0 V380.3 H671.0 V591.0 H678.9 V380.3 H687.7 V591.0 H696.1 V380.3 H705.1 V591.0 H714.0 V380.3 H739.0 V591.0 H747.4 V380.3 H756.4 V591.0 H764.8 V380.3 H790.3 V591.0 H798.6 V380.3 H824.2 V591.0 H832.0 V380.3 H857.8 V591.0 H866.6 V380.3 H891.7 V591.0 H900.0 V380.3 H926.0 V591.0 H933.9 V380.3 H959.9 V591.0 H967.8 V380.3 H977.3 V591.0 H985.0 V380.3 H993.8 V591.0 H1001.9 V380.3 H1011.2 V591.0 H1019.1 V380.3 H1027.4 V591.0 H1035.8 V380.3 H1044.8 V591.0 H1053.7 V380.3 H1062.7 V591.0 H1071.1 V380.3 H1079.9 V591.0 H1087.8 V380.3 H1096.6 V591.0 H1105.5 V380.3 H1131.2 V591.0 H1139.6 V380.3 H1164.6 V591.0 H1172.5 V380.3 H1198.7 V591.0 H1206.9 V380.3 H1571" fill="none" stroke="#0a0aff" stroke-width="2.2" stroke-linejoin="miter"/>
<path d="M1572,380.5 H1598" fill="none" stroke="#0a0aff" stroke-width="1"/><rect x="1597" y="380" width="2" height="213" fill="#0a0aff"/><path d="M1588,592.5 H1598" stroke="#0a0aff" stroke-width="1"/>
<path d="M1596.5,384 h3 v3 h-3 z M1596.5,389 h3 v4 h-3 z M1596.5,394 h3 v2 h-3 z M1596.5,400 h3 v2 h-3 z M1596.5,404 h3 v5 h-3 z M1596.5,410 h3 v5 h-3 z M1596.5,417 h3 v2 h-3 z M1596.5,420 h3 v4 h-3 z M1596.5,427 h3 v2 h-3 z M1596.5,431 h3 v2 h-3 z M1596.5,437 h3 v4 h-3 z M1596.5,442 h3 v5 h-3 z M1596.5,448 h3 v3 h-3 z M1596.5,455 h3 v2 h-3 z M1596.5,461 h3 v5 h-3 z M1596.5,469 h3 v2 h-3 z M1596.5,473 h3 v2 h-3 z M1596.5,479 h3 v3 h-3 z M1596.5,484 h3 v4 h-3 z M1596.5,490 h3 v5 h-3 z M1596.5,496 h3 v5 h-3 z M1596.5,503 h3 v5 h-3 z M1596.5,510 h3 v2 h-3 z M1596.5,516 h3 v5 h-3 z M1596.5,523 h3 v3 h-3 z M1596.5,527 h3 v5 h-3 z M1596.5,533 h3 v5 h-3 z M1596.5,539 h3 v5 h-3 z M1596.5,546 h3 v4 h-3 z M1596.5,554 h3 v4 h-3 z M1596.5,560 h3 v4 h-3 z M1596.5,568 h3 v4 h-3 z M1596.5,574 h3 v3 h-3 z M1596.5,579 h3 v3 h-3 z M1596.5,584 h3 v2 h-3 z" fill="#fff"/>
<line x1="212.5" y1="243" x2="212.5" y2="950" stroke="#7d7d7d" stroke-width="1" stroke-dasharray="1,2"/>
<line x1="363.5" y1="243" x2="363.5" y2="950" stroke="#7d7d7d" stroke-width="1" stroke-dasharray="1,2"/>
<line x1="514.5" y1="243" x2="514.5" y2="950" stroke="#7d7d7d" stroke-width="1" stroke-dasharray="1,2"/>
<line x1="665.5" y1="243" x2="665.5" y2="950" stroke="#7d7d7d" stroke-width="1" stroke-dasharray="1,2"/>
<line x1="816.5" y1="246" x2="816.5" y2="946" stroke="#7d7d7d" stroke-width="1" stroke-dasharray="4,2"/>
<line x1="967.5" y1="243" x2="967.5" y2="950" stroke="#7d7d7d" stroke-width="1" stroke-dasharray="1,2"/>
<line x1="1118.5" y1="243" x2="1118.5" y2="950" stroke="#7d7d7d" stroke-width="1" stroke-dasharray="1,2"/>
<line x1="1269.5" y1="243" x2="1269.5" y2="950" stroke="#7d7d7d" stroke-width="1" stroke-dasharray="1,2"/>
<line x1="1420.5" y1="243" x2="1420.5" y2="950" stroke="#7d7d7d" stroke-width="1" stroke-dasharray="1,2"/>
<line x1="79" y1="287.5" x2="1556" y2="287.5" stroke="#7d7d7d" stroke-width="1" stroke-dasharray="1,2"/>
<line x1="79" y1="364.5" x2="1556" y2="364.5" stroke="#7d7d7d" stroke-width="1" stroke-dasharray="1,2"/>
<line x1="79" y1="441.5" x2="1556" y2="441.5" stroke="#7d7d7d" stroke-width="1" stroke-dasharray="1,2"/>
<line x1="79" y1="518.5" x2="1556" y2="518.5" stroke="#7d7d7d" stroke-width="1" stroke-dasharray="1,2"/>
<line x1="79" y1="595.5" x2="1556" y2="595.5" stroke="#6a6a6a" stroke-width="1" stroke-dasharray="4,2"/>
<line x1="79" y1="672.5" x2="1556" y2="672.5" stroke="#7d7d7d" stroke-width="1" stroke-dasharray="1,2"/>
<line x1="79" y1="749.5" x2="1556" y2="749.5" stroke="#7d7d7d" stroke-width="1" stroke-dasharray="1,2"/>
<line x1="79" y1="826.5" x2="1556" y2="826.5" stroke="#7d7d7d" stroke-width="1" stroke-dasharray="1,2"/>
<line x1="79" y1="903.5" x2="1556" y2="903.5" stroke="#7d7d7d" stroke-width="1" stroke-dasharray="1,2"/>
<rect x="6.0" y="982.0" width="27.5" height="26.0" rx="3" fill="url(#btn)" stroke="#ababab"/>
<text x="19.80" y="1001.5" font-size="15" fill="#111" font-weight="bold" text-anchor="middle">X</text>
<rect x="36.5" y="982.0" width="9.5" height="26.0" rx="2" fill="url(#btn)" stroke="#ababab"/>
<path d="M38.2,992.5 L44.2,992.5 L41.2,996.5 Z" fill="#4a4a4a"/>
<rect x="1832" y="210" width="17" height="796" fill="url(#sbtrack)"/>
<rect x="1831" y="210" width="1" height="796" fill="#c8c8c8"/>
<rect x="1603" y="210" width="1" height="796" fill="#e2e2e2"/>
<path d="M1834.5,219 L1838,215 L1841.5,219 Z" fill="#555"/>
<rect x="1832" y="222" width="16" height="1" fill="#d8d8d8"/>
<path d="M1834.5,995 L1838,999 L1841.5,995 Z" fill="#555"/>
<rect x="1832" y="991" width="16" height="1" fill="#d8d8d8"/>
<rect x="1607" y="212" width="220" height="112" fill="#efefef" stroke="#000" stroke-width="4"/>
<rect x="1609.5" y="219.5" width="13" height="13" fill="#fff" stroke="#c0c0c0"/>
<path d="M1612,226 L1615,230 L1620.5,221.5" fill="none" stroke="#111" stroke-width="1.8"/>
<text x="1628.13" y="231.6" font-size="14.5" fill="#1e1e1e" textLength="33.59" lengthAdjust="spacingAndGlyphs">Time</text>
<rect x="1796.0" y="215.0" width="28.0" height="23.0" rx="3" fill="url(#btn)" stroke="#ababab"/>
<polygon points="1809.00,217.50 1810.11,217.57 1811.20,217.79 1812.25,218.15 1812.06,220.70 1812.73,221.14 1815.01,219.99 1815.74,220.83 1816.36,221.75 1816.85,222.75 1814.91,224.42 1815.07,225.20 1817.50,226.00 1817.43,227.11 1817.21,228.20 1816.85,229.25 1814.30,229.06 1813.86,229.73 1815.01,232.01 1814.17,232.74 1813.25,233.36 1812.25,233.85 1810.58,231.91 1809.80,232.07 1809.00,234.50 1807.89,234.43 1806.80,234.21 1805.75,233.85 1805.94,231.30 1805.27,230.86 1802.99,232.01 1802.26,231.17 1801.64,230.25 1801.15,229.25 1803.09,227.58 1802.93,226.80 1800.50,226.00 1800.57,224.89 1800.79,223.80 1801.15,222.75 1803.70,222.94 1804.14,222.27 1802.99,219.99 1803.83,219.26 1804.75,218.64 1805.75,218.15 1807.42,220.09 1808.20,219.93" fill="url(#gearg)" stroke="#66727a" stroke-width="1.3" stroke-linejoin="round"/>
<circle cx="1809.0" cy="226.0" r="3.74" fill="#3e4f5a"/>
<circle cx="1810.02" cy="225.57" r="2.04" fill="#f4f4f4"/>
<path d="M1813.7,233.2 h5.5 l-2.8,3.2 z" fill="#333"/>
<text x="1612.24" y="258.6" font-size="14.5" fill="#1e1e1e" textLength="60.35" lengthAdjust="spacingAndGlyphs">Position:</text>
<rect x="1694.5" y="241.5" width="128.5" height="24.5" rx="3" fill="#fff" stroke="#ababab"/>
<rect x="1803" y="242" width="19.5" height="23.5" fill="url(#btn)"/>
<rect x="1803" y="242" width="1" height="23.5" fill="#c4c4c4"/>
<path d="M1809.5,251.2 L1817.5,251.2 L1813.5,255.8 Z" fill="#4a4a4a"/>
<text x="1698.25" y="258.6" font-size="14.5" fill="#1e1e1e" textLength="39.55" lengthAdjust="spacingAndGlyphs">40 ms</text>
<text x="1612.32" y="286.3" font-size="14.5" fill="#1e1e1e" textLength="37.95" lengthAdjust="spacingAndGlyphs">Base:</text>
<rect x="1694.5" y="269.5" width="128.5" height="24.5" rx="3" fill="#fff" stroke="#ababab"/>
<rect x="1803" y="270" width="19.5" height="23.5" fill="url(#btn)"/>
<rect x="1803" y="270" width="1" height="23.5" fill="#c4c4c4"/>
<path d="M1809.5,279.2 L1817.5,279.2 L1813.5,283.8 Z" fill="#4a4a4a"/>
<text x="1697.43" y="286.3" font-size="14.5" fill="#1e1e1e" textLength="66.13" lengthAdjust="spacingAndGlyphs">10 ms/div</text>
<rect x="1610.5" y="296.5" width="213" height="24" rx="3" fill="url(#gbtn)" stroke="#b9b9b9"/>
<path d="M1620.5,300.5 h4 v9.5 h3.5 l-5.5,7 l-5.5,-7 h3.5 z" fill="url(#garr)" stroke="#4a9a40" stroke-width="0.5"/>
<text x="1633.46" y="313.5" font-size="14.5" fill="#1e1e1e" textLength="106.11" lengthAdjust="spacingAndGlyphs">Rate, Samples...</text>
<polygon points="1616.50,331.00 1617.74,331.08 1618.96,331.32 1620.14,331.72 1619.92,334.58 1620.66,335.07 1623.22,333.78 1624.04,334.72 1624.73,335.75 1625.28,336.86 1623.11,338.73 1623.28,339.61 1626.00,340.50 1625.92,341.74 1625.68,342.96 1625.28,344.14 1622.42,343.92 1621.93,344.66 1623.22,347.22 1622.28,348.04 1621.25,348.73 1620.14,349.28 1618.27,347.11 1617.39,347.28 1616.50,350.00 1615.26,349.92 1614.04,349.68 1612.86,349.28 1613.08,346.42 1612.34,345.93 1609.78,347.22 1608.96,346.28 1608.27,345.25 1607.72,344.14 1609.89,342.27 1609.72,341.39 1607.00,340.50 1607.08,339.26 1607.32,338.04 1607.72,336.86 1610.58,337.08 1611.07,336.34 1609.78,333.78 1610.72,332.96 1611.75,332.27 1612.86,331.72 1614.73,333.89 1615.61,333.72" fill="url(#gearg)" stroke="#66727a" stroke-width="1.3" stroke-linejoin="round"/>
<circle cx="1616.5" cy="340.5" r="4.18" fill="#3e4f5a"/>
<circle cx="1617.64" cy="340.02" r="2.28" fill="#f4f4f4"/>
<text x="1631.79" y="346.7" font-size="14.5" fill="#1e1e1e" textLength="54.14" lengthAdjust="spacingAndGlyphs">Options</text>
<path d="M1817.5,339.0 L1824.5,339.0 L1821.0,343.0 Z" fill="#4a4a4a"/>
<rect x="1606.0" y="357.0" width="222.0" height="25.0" rx="3" fill="url(#btn)" stroke="#ababab"/>
<path d="M1612,361.5 h4.5 v5 h5 v4.5 h-5 v5 h-4.5 v-5 h-5 v-4.5 h5 z" fill="#5cc13a" stroke="#3d9a24" stroke-width="0.6"/>
<text x="1626.50" y="374.4" font-size="14.5" fill="#1e1e1e" textLength="85.46" lengthAdjust="spacingAndGlyphs">Add Channel</text>
<path d="M1817.5,367.5 L1824.5,367.5 L1821.0,371.5 Z" fill="#4a4a4a"/>
<rect x="1607" y="386.2" width="220" height="28.5" fill="#efefef" stroke="#ff8800" stroke-width="4.2"/>
<rect x="1609.5" y="393.5" width="13" height="13" fill="#fff" stroke="#c0c0c0"/>
<text x="1627.64" y="406.0" font-size="14.5" fill="#1e1e1e" textLength="96.90" lengthAdjust="spacingAndGlyphs">Channel 1 (1±)</text>
<rect x="1796.0" y="389.0" width="28.5" height="23.0" rx="3" fill="url(#btn)" stroke="#ababab"/>
<polygon points="1809.25,391.50 1810.36,391.57 1811.45,391.79 1812.50,392.15 1812.31,394.70 1812.98,395.14 1815.26,393.99 1815.99,394.83 1816.61,395.75 1817.10,396.75 1815.16,398.42 1815.32,399.20 1817.75,400.00 1817.68,401.11 1817.46,402.20 1817.10,403.25 1814.55,403.06 1814.11,403.73 1815.26,406.01 1814.42,406.74 1813.50,407.36 1812.50,407.85 1810.83,405.91 1810.05,406.07 1809.25,408.50 1808.14,408.43 1807.05,408.21 1806.00,407.85 1806.19,405.30 1805.52,404.86 1803.24,406.01 1802.51,405.17 1801.89,404.25 1801.40,403.25 1803.34,401.58 1803.18,400.80 1800.75,400.00 1800.82,398.89 1801.04,397.80 1801.40,396.75 1803.95,396.94 1804.39,396.27 1803.24,393.99 1804.08,393.26 1805.00,392.64 1806.00,392.15 1807.67,394.09 1808.45,393.93" fill="url(#gearg)" stroke="#66727a" stroke-width="1.3" stroke-linejoin="round"/>
<circle cx="1809.25" cy="400.0" r="3.74" fill="#3e4f5a"/>
<circle cx="1810.27" cy="399.57" r="2.04" fill="#f4f4f4"/>
<path d="M1813.9,407.2 h5.5 l-2.8,3.2 z" fill="#333"/>
<rect x="1607" y="420" width="220" height="86" fill="#efefef" stroke="#0000ff" stroke-width="4.2"/>
<rect x="1609.5" y="427.5" width="13" height="13" fill="#fff" stroke="#c0c0c0"/>
<path d="M1612,434 L1615,438 L1620.5,429.5" fill="none" stroke="#111" stroke-width="1.8"/>
<text x="1627.64" y="440.0" font-size="14.5" fill="#1e1e1e" textLength="96.90" lengthAdjust="spacingAndGlyphs">Channel 2 (2±)</text>
<rect x="1796.0" y="423.0" width="28.5" height="22.5" rx="3" fill="url(#btn)" stroke="#ababab"/>
<polygon points="1809.25,425.25 1810.36,425.32 1811.45,425.54 1812.50,425.90 1812.31,428.45 1812.98,428.89 1815.26,427.74 1815.99,428.58 1816.61,429.50 1817.10,430.50 1815.16,432.17 1815.32,432.95 1817.75,433.75 1817.68,434.86 1817.46,435.95 1817.10,437.00 1814.55,436.81 1814.11,437.48 1815.26,439.76 1814.42,440.49 1813.50,441.11 1812.50,441.60 1810.83,439.66 1810.05,439.82 1809.25,442.25 1808.14,442.18 1807.05,441.96 1806.00,441.60 1806.19,439.05 1805.52,438.61 1803.24,439.76 1802.51,438.92 1801.89,438.00 1801.40,437.00 1803.34,435.33 1803.18,434.55 1800.75,433.75 1800.82,432.64 1801.04,431.55 1801.40,430.50 1803.95,430.69 1804.39,430.02 1803.24,427.74 1804.08,427.01 1805.00,426.39 1806.00,425.90 1807.67,427.84 1808.45,427.68" fill="url(#gearg)" stroke="#66727a" stroke-width="1.3" stroke-linejoin="round"/>
<circle cx="1809.25" cy="433.75" r="3.74" fill="#3e4f5a"/>
<circle cx="1810.27" cy="433.32" r="2.04" fill="#f4f4f4"/>
<path d="M1813.9,441.0 h5.5 l-2.8,3.2 z" fill="#333"/>
<text x="1612.74" y="466.6" font-size="14.5" fill="#1e1e1e" textLength="48.85" lengthAdjust="spacingAndGlyphs">Offset:</text>
<rect x="1694.5" y="449.0" width="128.5" height="25.0" rx="3" fill="#fff" stroke="#ababab"/>
<rect x="1803" y="449.5" width="19.5" height="24.0" fill="url(#btn)"/>
<rect x="1803" y="449.5" width="1" height="24.0" fill="#c4c4c4"/>
<path d="M1809.5,459.2 L1817.5,459.2 L1813.5,463.8 Z" fill="#4a4a4a"/>
<text x="1698.02" y="466.6" font-size="14.5" fill="#1e1e1e" textLength="20.79" lengthAdjust="spacingAndGlyphs">0 V</text>
<text x="1612.31" y="494.7" font-size="14.5" fill="#1e1e1e" textLength="48.19" lengthAdjust="spacingAndGlyphs">Range:</text>
<rect x="1694.5" y="477.0" width="128.5" height="25.0" rx="3" fill="#fff" stroke="#ababab"/>
<rect x="1803" y="477.5" width="19.5" height="24.0" fill="url(#btn)"/>
<rect x="1803" y="477.5" width="1" height="24.0" fill="#c4c4c4"/>
<path d="M1809.5,487.2 L1817.5,487.2 L1813.5,491.8 Z" fill="#4a4a4a"/>
<text x="1697.87" y="494.7" font-size="14.5" fill="#1e1e1e" textLength="45.52" lengthAdjust="spacingAndGlyphs">1 V/div</text>
<rect x="1609.5" y="509.5" width="85" height="27" rx="3" fill="url(#gbtn)" stroke="#b9b9b9"/>
<rect x="1699.5" y="509.5" width="130" height="27" rx="3" fill="url(#gbtn)" stroke="#b9b9b9"/>
<path d="M1621,514 h4 v11.5 h3.5 l-5.5,7 l-5.5,-7 h3.5 z" fill="url(#garr)" stroke="#4a9a40" stroke-width="0.5"/>
<path d="M1711,514 h4 v11.5 h3.5 l-5.5,7 l-5.5,-7 h3.5 z" fill="url(#garr)" stroke="#4a9a40" stroke-width="0.5"/>
<text x="1634.73" y="528.6" font-size="14.5" fill="#1e1e1e" textLength="43.20" lengthAdjust="spacingAndGlyphs">Filters</text>
<text x="1726.50" y="528.6" font-size="14.5" fill="#1e1e1e" textLength="68.47" lengthAdjust="spacingAndGlyphs">Wavegens</text>
<rect x="3" y="1009" width="1848" height="1" fill="#acacac"/>
<text x="8.94" y="1033.8" font-size="14.5" fill="#1e1e1e" textLength="220.52" lengthAdjust="spacingAndGlyphs">Script: Scope1.Channel1.checked</text>
<rect x="1127.5" y="1014.5" width="141" height="27.5" rx="3" fill="url(#btn)" stroke="#ababab"/>
<path d="M1138.2,1031 V1022.2 Q1138.2,1021 1139.4,1021 Q1140.7,1021 1140.7,1022.2 V1026.8 L1143,1026.3 L1145,1026.8 L1147.2,1027.5 Q1147.8,1028 1147.8,1029 V1035.5 L1147,1038.6 H1139.2 L1135.3,1032.5 Q1135,1031.3 1136.2,1030.8 Z" fill="#c8c8c8" stroke="#4f4f4f" stroke-width="1.1" stroke-linejoin="round"/>
<path d="M1140.7,1027 V1031 M1143.2,1026.5 V1028.5 M1145.3,1027 V1029" stroke="#4f4f4f" stroke-width="0.8"/>
<path d="M1134.3,1022.5 h2.5 M1142.6,1022.5 h2.5 M1136.2,1019.3 l1.6,1.6 M1143,1019.3 l-1.6,1.6 M1139.6,1017.5 v1.8" stroke="#555" stroke-width="1.1"/>
<text x="1152.77" y="1033.7" font-size="14.5" fill="#1e1e1e" textLength="102.56" lengthAdjust="spacingAndGlyphs">Manual Trigger</text>
<rect x="1275.5" y="1014.5" width="255" height="27.5" rx="3" fill="url(#btn)" stroke="#ababab"/>
<path d="M1285.5,1022 H1299.0 Q1300.5,1022 1300.0,1023.5 L1296.0,1033 Q1295.5,1034.2 1294.0,1034.2 H1280.0 Q1278.5,1034.2 1278.9,1032.8 L1283.5,1023.2 Q1284.0,1022 1285.5,1022 Z" fill="url(#devg)" stroke="#8a8a8a" stroke-width="0.7"/>
<rect x="1280.0" y="1030.5" width="14.5" height="2.2" fill="#e8e8e8"/>
<rect x="1280.3" y="1030.8" width="4.5" height="1.5" fill="#7cc67c"/>
<rect x="1285.0" y="1030.8" width="3.5" height="1.5" fill="#d99a9a"/>
<text x="1300.94" y="1033.7" font-size="14.5" fill="#1e1e1e" textLength="216.16" lengthAdjust="spacingAndGlyphs">Discovery3 C SN:210415B99C58</text>
<rect x="1537.5" y="1014.5" width="99" height="27.5" rx="3" fill="url(#btn)" stroke="#ababab"/>
<path d="M1547.5,1022 H1561.0 Q1562.5,1022 1562.0,1023.5 L1558.0,1033 Q1557.5,1034.2 1556.0,1034.2 H1542.0 Q1540.5,1034.2 1540.9,1032.8 L1545.5,1023.2 Q1546.0,1022 1547.5,1022 Z" fill="url(#devg)" stroke="#8a8a8a" stroke-width="0.7"/>
<rect x="1542.0" y="1030.5" width="14.5" height="2.2" fill="#e8e8e8"/>
<rect x="1542.3" y="1030.8" width="4.5" height="1.5" fill="#7cc67c"/>
<rect x="1547.0" y="1030.8" width="3.5" height="1.5" fill="#d99a9a"/>
<polygon points="1546.20,1017.90 1546.93,1017.95 1547.65,1018.09 1548.34,1018.33 1548.22,1020.01 1548.65,1020.30 1550.16,1019.54 1550.64,1020.09 1551.05,1020.70 1551.37,1021.36 1550.09,1022.46 1550.20,1022.97 1551.80,1023.50 1551.75,1024.23 1551.61,1024.95 1551.37,1025.64 1549.69,1025.52 1549.40,1025.95 1550.16,1027.46 1549.61,1027.94 1549.00,1028.35 1548.34,1028.67 1547.24,1027.39 1546.73,1027.50 1546.20,1029.10 1545.47,1029.05 1544.75,1028.91 1544.06,1028.67 1544.18,1026.99 1543.75,1026.70 1542.24,1027.46 1541.76,1026.91 1541.35,1026.30 1541.03,1025.64 1542.31,1024.54 1542.20,1024.03 1540.60,1023.50 1540.65,1022.77 1540.79,1022.05 1541.03,1021.36 1542.71,1021.48 1543.00,1021.05 1542.24,1019.54 1542.79,1019.06 1543.40,1018.65 1544.06,1018.33 1545.16,1019.61 1545.67,1019.50" fill="url(#gearg)" stroke="#66727a" stroke-width="1.3" stroke-linejoin="round"/>
<circle cx="1546.2" cy="1023.5" r="2.46" fill="#3e4f5a"/>
<circle cx="1546.87" cy="1023.22" r="1.34" fill="#f4f4f4"/>
<text x="1563.97" y="1033.7" font-size="14.5" fill="#1e1e1e" textLength="59.63" lengthAdjust="spacingAndGlyphs">100 MHz</text>
<path d="M1628.0,1035.8 L1634.0,1035.8 L1631.0,1039.2 Z" fill="#4a4a4a"/>
<rect x="1643.5" y="1014.5" width="111" height="27.5" rx="3" fill="url(#btn)" stroke="#ababab"/>
<text x="1665.75" y="1033.7" font-size="14.5" fill="#1e1e1e" textLength="65.73" lengthAdjust="spacingAndGlyphs">Status: LV</text>
<path d="M1746.0,1035.8 L1752.0,1035.8 L1749.0,1039.2 Z" fill="#4a4a4a"/>
<rect x="1761.5" y="1014.5" width="88" height="27.5" rx="3" fill="url(#btn)" stroke="#ababab"/>
<g transform="translate(1764,1020.5) scale(0.95)"><clipPath id="wclip1764"><path d="M0.1,0.5 L4.8,0.5 L7.4,7.2 L10.9,0.2 L14.5,7.2 L17.2,0.5 L21.8,0.5 L14.4,15.8 L10.9,9.6 L7.4,15.8 Z"/></clipPath><path d="M0.1,0.5 L4.8,0.5 L7.4,7.2 L10.9,0.2 L14.5,7.2 L17.2,0.5 L21.8,0.5 L14.4,15.8 L10.9,9.6 L7.4,15.8 Z" fill="#159a44" stroke="#333" stroke-width="0.9" stroke-linejoin="round"/><g clip-path="url(#wclip1764)"><path d="M-1,-1 H23 V9 Q16,10.5 1.5,2.8 Z" fill="#8ad444"/><path d="M1.5,3 Q9,6.5 16.5,10.5" stroke="#f4fff0" stroke-width="1.1" fill="none"/></g></g>
<text x="1788.00" y="1033.7" font-size="14.5" fill="#1e1e1e" textLength="48.34" lengthAdjust="spacingAndGlyphs">v3.24.2</text>
<line x1="1268.0" y1="199.0" x2="1274" y2="204.5" stroke="#4a4a4a" stroke-width="3.2" stroke-linecap="round"/>
<circle cx="1263.5" cy="194.5" r="7.5" fill="#c8c8c8"/>
<circle cx="1263.5" cy="194.5" r="5.7" fill="#5d9be0"/>
<circle cx="1262.5" cy="193.0" r="3.5" fill="#8ab8ee" opacity="0.7"/>
<text x="1260.90" y="198.5" font-size="10" fill="#fff" font-weight="bold">1</text>
<rect x="1282.5" y="182.5" width="33" height="26.5" rx="3" fill="#dcdcdc" stroke="#b9b9b9"/>
<rect x="1295" y="186" width="8" height="19.5" rx="4" fill="#f0a060"/>
<rect x="1288.5" y="195.2" width="21" height="2.2" rx="1" fill="#ff6a10"/>
<path d="M1335,196 L1328,189" stroke="#2a92f0" stroke-width="1.8"/>
<path d="M1326,187 L1332.5,188.5 L1327.5,193.5 Z" fill="#2a92f0"/>
<rect x="1324" y="197.5" width="18" height="5" fill="#d4d4d4"/>
<rect x="1324" y="201.0" width="18" height="1.5" fill="#a8a8a8"/>
<path d="M1326.0,198.0 v2 M1328.0,198.0 v2 M1330.0,198.0 v2 M1332.0,198.0 v2 M1334.0,198.0 v2 M1336.0,198.0 v2 M1338.0,198.0 v2" stroke="#9a9a9a" stroke-width="0.7"/>
<path d="M1359.5,187.5 v9 M1373,187.5 v9 M1359.5,192 H1373" stroke="#2a92f0" stroke-width="1.8" fill="none"/>
<rect x="1358" y="199" width="18" height="5" fill="#d4d4d4"/>
<rect x="1358" y="202.5" width="18" height="1.5" fill="#a8a8a8"/>
<path d="M1360.0,199.5 v2 M1362.0,199.5 v2 M1364.0,199.5 v2 M1366.0,199.5 v2 M1368.0,199.5 v2 M1370.0,199.5 v2 M1372.0,199.5 v2" stroke="#9a9a9a" stroke-width="0.7"/>
<path d="M1391.5,190.5 H1403.5 M1391.5,203 H1403.5 M1397.5,190.5 V203" stroke="#2a92f0" stroke-width="1.8" fill="none"/>
<rect x="1405.5" y="187" width="5.5" height="18" fill="#d4d4d4"/>
<rect x="1409.5" y="187" width="1.5" height="18" fill="#a8a8a8"/>
<path d="M1428.5,185 V196 M1428.5,188 H1444.5 M1428.5,192.2 H1437" stroke="#2a92f0" stroke-width="1.8" fill="none"/>
<rect x="1426" y="197.5" width="18" height="5" fill="#d4d4d4"/>
<rect x="1426" y="201.0" width="18" height="1.5" fill="#a8a8a8"/>
<path d="M1428.0,198.0 v2 M1430.0,198.0 v2 M1432.0,198.0 v2 M1434.0,198.0 v2 M1436.0,198.0 v2 M1438.0,198.0 v2 M1440.0,198.0 v2" stroke="#9a9a9a" stroke-width="0.7"/>
<text x="1458.80" y="194.8" font-size="9" fill="#2a92f0" font-weight="bold">1</text>
<text x="1470.50" y="194.8" font-size="9" fill="#2a92f0" font-weight="bold">2</text>
<text x="1462.60" y="205.2" font-size="9" fill="#2a92f0" font-weight="bold">3</text>
<text x="1473.20" y="205.2" font-size="9" fill="#2a92f0" font-weight="bold">4</text>
<path d="M1500.0,203.0 L1506.0,203.0 L1503.0,206.0 Z" fill="#4a4a4a"/>
<line x1="1528.0" y1="199.0" x2="1534.5" y2="205" stroke="#4a4a4a" stroke-width="3.2" stroke-linecap="round"/>
<circle cx="1523.5" cy="194.5" r="7.5" fill="#c8c8c8"/>
<circle cx="1523.5" cy="194.5" r="5.7" fill="#5d9be0"/>
<circle cx="1522.5" cy="193.0" r="3.5" fill="#8ab8ee" opacity="0.7"/>
<path d="M1519.5,192.5 v-2 h2 M1525.5,190.5 h2 v2 M1519.5,196.5 v2 h2 M1525.5,198.5 h2 v-2" stroke="#fff" stroke-width="1" fill="none"/>
<rect x="1543.0" y="183.0" width="28.0" height="26.0" rx="3" fill="url(#btn)" stroke="#ababab"/>
<polygon points="1555.50,186.20 1556.65,186.28 1557.78,186.50 1558.87,186.87 1558.67,189.51 1559.36,189.97 1561.72,188.78 1562.48,189.64 1563.12,190.60 1563.63,191.63 1561.62,193.36 1561.78,194.17 1564.30,195.00 1564.22,196.15 1564.00,197.28 1563.63,198.37 1560.99,198.17 1560.53,198.86 1561.72,201.22 1560.86,201.98 1559.90,202.62 1558.87,203.13 1557.14,201.12 1556.33,201.28 1555.50,203.80 1554.35,203.72 1553.22,203.50 1552.13,203.13 1552.33,200.49 1551.64,200.03 1549.28,201.22 1548.52,200.36 1547.88,199.40 1547.37,198.37 1549.38,196.64 1549.22,195.83 1546.70,195.00 1546.78,193.85 1547.00,192.72 1547.37,191.63 1550.01,191.83 1550.47,191.14 1549.28,188.78 1550.14,188.02 1551.10,187.38 1552.13,186.87 1553.86,188.88 1554.67,188.72" fill="url(#gearg)" stroke="#66727a" stroke-width="1.3" stroke-linejoin="round"/>
<circle cx="1555.5" cy="195" r="3.87" fill="#3e4f5a"/>
<circle cx="1556.56" cy="194.56" r="2.11" fill="#f4f4f4"/>
<path d="M1560.3,202.5 h5.7 l-2.9,3.3 z" fill="#333"/>
<rect x="1572.5" y="182.5" width="28" height="27" fill="url(#btn)" stroke="#ababab"/>
<text x="1590.50" y="202.2" font-size="15" fill="#111" font-weight="bold" text-anchor="middle">Y</text>
<rect x="1601" y="181" width="249" height="29" fill="#f6f6f6"/>
<path d="M1606,194 H1618.2 V192 L1624.1,197 L1618.2,202 V199.8 H1606 Z" fill="url(#garr2)"/>
<polygon points="1835.50,61.50 1836.74,61.58 1837.96,61.82 1839.14,62.22 1838.92,65.08 1839.66,65.57 1842.22,64.28 1843.04,65.22 1843.73,66.25 1844.28,67.36 1842.11,69.23 1842.28,70.11 1845.00,71.00 1844.92,72.24 1844.68,73.46 1844.28,74.64 1841.42,74.42 1840.93,75.16 1842.22,77.72 1841.28,78.54 1840.25,79.23 1839.14,79.78 1837.27,77.61 1836.39,77.78 1835.50,80.50 1834.26,80.42 1833.04,80.18 1831.86,79.78 1832.08,76.92 1831.34,76.43 1828.78,77.72 1827.96,76.78 1827.27,75.75 1826.72,74.64 1828.89,72.77 1828.72,71.89 1826.00,71.00 1826.08,69.76 1826.32,68.54 1826.72,67.36 1829.58,67.58 1830.07,66.84 1828.78,64.28 1829.72,63.46 1830.75,62.77 1831.86,62.22 1833.73,64.39 1834.61,64.22" fill="url(#gearg)" stroke="#66727a" stroke-width="1.3" stroke-linejoin="round"/>
<circle cx="1835.5" cy="71" r="4.18" fill="#3e4f5a"/>
<circle cx="1836.64" cy="70.53" r="2.28" fill="#f4f4f4"/>
</svg>
</body></html>
